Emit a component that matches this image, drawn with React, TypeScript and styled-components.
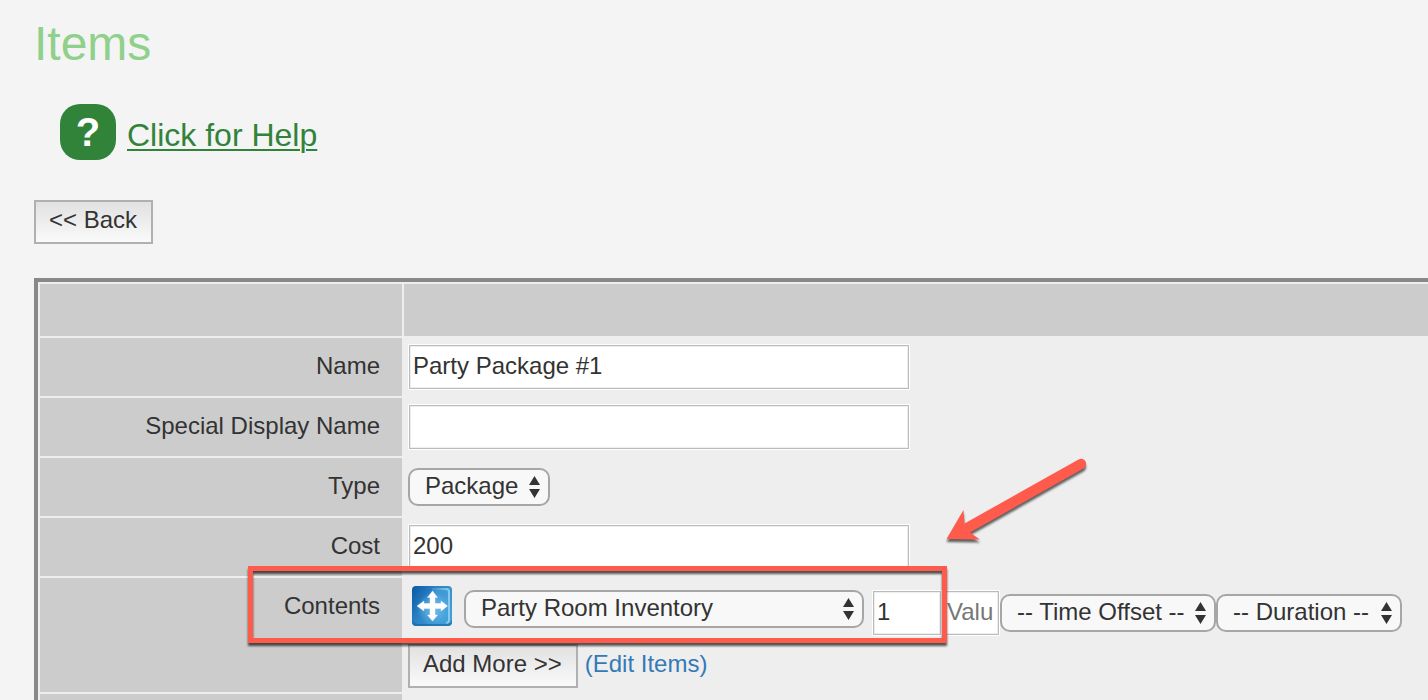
import React from 'react';
import styled, { createGlobalStyle } from 'styled-components';

const GlobalStyle = createGlobalStyle`
  *, *::before, *::after { box-sizing: border-box; }
  body {
    margin: 0;
    background: #f4f4f4;
    color: #333;
    font: 24px/28px "Liberation Sans", Arial, sans-serif;
  }
`;

const Page = styled.main`
  display: flex;
  flex-direction: column;
  align-items: flex-start;
  min-height: 100vh;
  padding-left: 34px;
  overflow: hidden;
`;

const Title = styled.h1`
  margin: 16px 0 32px;
  color: #8fd08b;
  font-size: 48px;
  line-height: 56px;
  font-weight: 400;
`;

const HelpLink = styled.a`
  display: flex;
  align-items: center;
  gap: 11px;
  margin: 0 0 40px 26px;
  color: #31833a;
  font-size: 32px;
  line-height: 40px;
  text-decoration: none;
`;

const HelpBadge = styled.span`
  width: 56px;
  height: 56px;
  border-radius: 20px;
  background: #31833a;
  color: #fff;
  font-size: 40px;
  font-weight: 700;
  line-height: 56px;
  text-align: center;
`;

const HelpText = styled.span`
  padding-top: 6px;
  text-decoration: underline;
  text-decoration-thickness: 2px;
  text-underline-offset: 3px;
`;

const Button = styled.button`
  height: 44px;
  padding: 0 14px 5px 13px;
  border: 2px solid #b0b0b0;
  border-radius: 0;
  background: linear-gradient(#e1e1e1, #fafafa);
  color: #333;
  font: inherit;
  white-space: nowrap;
`;

const Form = styled.form`
  display: flex;
  flex: 1;
  flex-direction: column;
  align-self: stretch;
  gap: 2px;
  margin-top: 34px;
  padding: 2px 0 0 2px;
  border: solid #888;
  border-width: 4px 0 0 4px;
  background: #eee;
`;

const Row = styled.div<{ $height: number; $fill?: boolean }>`
  position: relative;
  display: grid;
  grid-template-columns: 362px 1fr;
  gap: 2px;
  min-height: ${(p) => p.$height}px;
  flex: ${(p) => (p.$fill ? '1 0 auto' : 'none')};
`;

const LabelCell = styled.div`
  padding: 14px 22px 0 0;
  background: #ccc;
  text-align: right;
`;

const HeadCell = styled.div`
  background: #ccc;
`;

const ValueCell = styled.div`
  display: flex;
  align-items: center;
  padding-left: 4px;
`;

const ContentsCell = styled.div`
  display: flex;
  flex-direction: column;
  gap: 4px;
  padding: 8px 0 4px 4px;
`;

const ContentsLine = styled.div`
  display: flex;
  align-items: center;
  height: 54px;
`;

const ItemPicker = styled.div`
  display: flex;
  align-items: flex-end;
  align-self: flex-start;
  gap: 12px;
  height: 42px;
  margin: 0 8px 0 4px;
`;

const DragHandle = styled.svg`
  align-self: flex-start;
  width: 40px;
  height: 40px;
`;

const TextInput = styled.input<{ $width: number }>`
  width: ${(p) => p.$width}px;
  height: 44px;
  margin: 0 1px;
  padding: 0 3px 2px;
  border: 1px solid #bbb;
  border-radius: 0;
  outline: 0;
  background: #fff;
  box-shadow: 0 0 0 1px #fff, inset 0 0 0 1px #eee;
  color: #333;
  font: inherit;
  &::placeholder { color: #777; opacity: 1; }
`;

const SelectBox = styled.span<{ $width: number }>`
  position: relative;
  display: block;
  width: ${(p) => p.$width}px;
  height: 38px;
  select {
    width: 100%;
    height: 100%;
    padding: 0 24px 2px 15px;
    border: 2px solid #a6a6a6;
    border-radius: 10px;
    appearance: none;
    background: #f8f8f8;
    color: #333;
    font: inherit;
  }
  svg {
    position: absolute;
    top: 8px;
    right: 10px;
    pointer-events: none;
  }
`;

const ActionLine = styled.div`
  display: flex;
  gap: 7px;
`;

const EditLink = styled.a`
  padding-top: 6px;
  color: #337ab7;
  text-decoration: none;
`;

const Highlight = styled.div`
  position: absolute;
  top: -12px;
  left: 208px;
  width: 699px;
  height: 77px;
  border: 5px solid #ff5b4d;
  filter: drop-shadow(0 3px 1px rgba(0, 0, 0, 0.65));
  pointer-events: none;
`;

const Pointer = styled.svg`
  position: absolute;
  top: -122px;
  left: 904px;
  pointer-events: none;
  filter: drop-shadow(0 3px 1px rgba(0, 0, 0, 0.6));
`;

function Select(props: { id?: string; label?: string; width: number; value: string }) {
  return (
    <SelectBox $width={props.width}>
      <select id={props.id} aria-label={props.label}>
        <option>{props.value}</option>
      </select>
      <svg width="11" height="22" viewBox="0 0 11 22" aria-hidden="true">
        <path d="M5.5 0 11 9H0zM5.5 22 0 13h11z" fill="#333" />
      </svg>
    </SelectBox>
  );
}

function MoveIcon() {
  return (
    <DragHandle viewBox="0 0 40 40" role="img" aria-label="Move">
      <defs>
        <linearGradient id="tile" x1="0" y1="0" x2="1" y2="0.6">
          <stop offset="0" stopColor="#0b57a3" />
          <stop offset="0.45" stopColor="#2a82c4" />
          <stop offset="1" stopColor="#3d9fd9" />
        </linearGradient>
        <linearGradient id="edge" x1="0" y1="0" x2="1" y2="0">
          <stop offset="0.3" stopColor="#8fcaec" stopOpacity="0" />
          <stop offset="1" stopColor="#8fcaec" />
        </linearGradient>
        <radialGradient id="glow" cx="0.5" cy="0.5" r="0.5">
          <stop offset="0" stopColor="#7cc4ee" stopOpacity="0.9" />
          <stop offset="1" stopColor="#7cc4ee" stopOpacity="0" />
        </radialGradient>
      </defs>
      <rect width="40" height="40" rx="4" fill="url(#tile)" />
      <path d="M20 2h16q2 0 2 2v16q-10-3-18 0z" fill="#62b3e2" opacity="0.35" />
      <circle cx="22" cy="23" r="17" fill="url(#glow)" />
      <path d="M16 3h18q3 0 3 3v28q0 3-3 3" fill="none" stroke="url(#edge)" strokeWidth="2" />
      <path d="M0 34q0 6 4 6h32q4 0 4-4v-2q-2 4-6 4H6q-4 0-6-4z" fill="#17639f" opacity="0.6" />
      <path
        d="M20.500 5 25.500 11.500H23V17.500H29V15L35.500 20 29 25V22.500H23V29H25.500L20.500 35 15.500 29H18V22.500H12V25L5 20 12 15V17.500H18V11.500H15.500Z"
        fill="#fff"
        stroke="#fff"
        strokeOpacity="0.4"
        strokeWidth="1"
        strokeLinejoin="round"
      />
    </DragHandle>
  );
}

export default function App() {
  return (
    <>
      <GlobalStyle />
      <Page>
        <Title>Items</Title>
        <HelpLink href="#help">
          <HelpBadge aria-hidden="true">?</HelpBadge>
          <HelpText>Click for Help</HelpText>
        </HelpLink>
        <Button type="button">&lt;&lt; Back</Button>

        <Form>
          <Row $height={52}>
            <HeadCell />
            <HeadCell />
          </Row>
          <Row $height={58}>
            <LabelCell><label htmlFor="name">Name</label></LabelCell>
            <ValueCell><TextInput id="name" $width={500} defaultValue="Party Package #1" /></ValueCell>
          </Row>
          <Row $height={58}>
            <LabelCell><label htmlFor="display">Special Display Name</label></LabelCell>
            <ValueCell><TextInput id="display" $width={500} /></ValueCell>
          </Row>
          <Row $height={58}>
            <LabelCell><label htmlFor="type">Type</label></LabelCell>
            <ValueCell><Select id="type" width={142} value="Package" /></ValueCell>
          </Row>
          <Row $height={58}>
            <LabelCell><label htmlFor="cost">Cost</label></LabelCell>
            <ValueCell><TextInput id="cost" $width={500} defaultValue="200" /></ValueCell>
          </Row>
          <Row $height={114}>
            <LabelCell><label htmlFor="contents">Contents</label></LabelCell>
            <ContentsCell>
              <ContentsLine>
                <ItemPicker>
                  <MoveIcon />
                  <Select id="contents" width={400} value="Party Room Inventory" />
                </ItemPicker>
                <TextInput $width={68} aria-label="Quantity" defaultValue="1" />
                <TextInput $width={56} aria-label="Value" placeholder="Valu" />
                <Select label="Time offset" width={216} value="-- Time Offset --" />
                <Select label="Duration" width={186} value="-- Duration --" />
              </ContentsLine>
              <ActionLine>
                <Button type="button">Add More &gt;&gt;</Button>
                <EditLink href="#items">(Edit Items)</EditLink>
              </ActionLine>
            </ContentsCell>
            <Highlight />
            <Pointer width="146" height="92" viewBox="944 456 146 92" aria-hidden="true">
              <path
                d="M1078.500 459.500C1085 456.500 1089 465 1083.500 468.500L970 532.500 980 539.500 946.500 539 963.500 510 964.500 523.500Z"
                fill="#ff5b4d"
              />
            </Pointer>
          </Row>
          <Row $height={6} $fill>
            <LabelCell />
            <ValueCell />
          </Row>
        </Form>
      </Page>
    </>
  );
}
